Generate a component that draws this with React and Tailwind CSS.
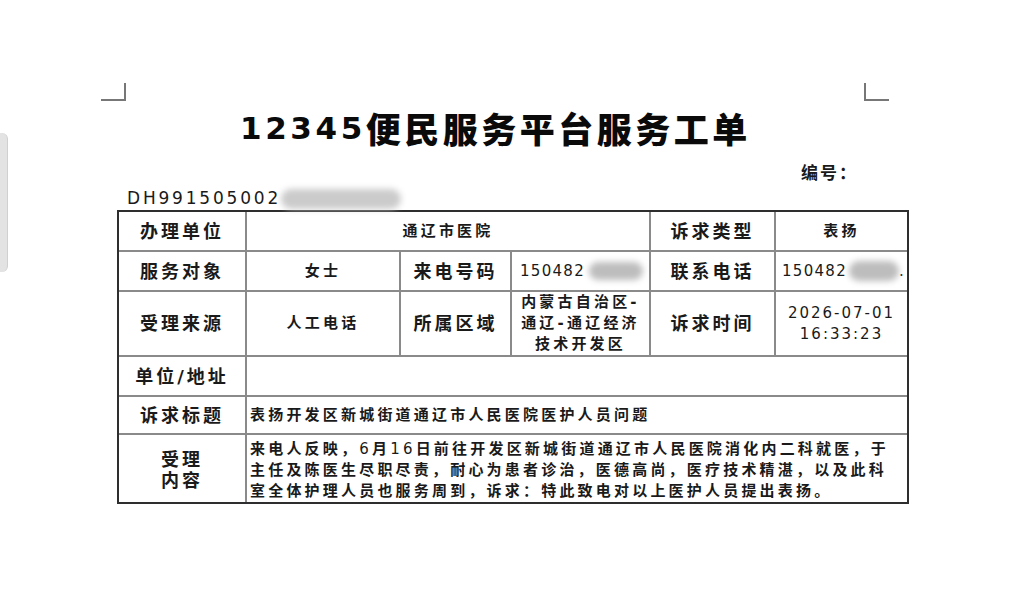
const Label = ({ children, className = '' }) => (
  <div className={`bg-white flex items-center justify-center text-center text-[18px] leading-[21px] tracking-[3px] font-semibold ${className}`}>
    {children}
  </div>
);

const Value = ({ children, className = '' }) => (
  <div className={`bg-white flex items-center text-[15px] leading-[21px] tracking-[3.2px] font-semibold ${className}`}>
    {children}
  </div>
);

const Smudge = ({ className = '' }) => (
  <span className={`inline-block rounded-full bg-[#bdbdbd] blur-[3px] ${className}`} />
);

export default function App() {
  return (
    <div className="relative w-[1024px] h-[612px] bg-white overflow-hidden text-[#1a1a1a] font-['DejaVu_Sans','Noto_Sans_CJK_SC',sans-serif]">
      {/* edge of the next page */}
      <div className="absolute left-0 top-[133px] w-[8px] h-[139px] rounded-r-[6px] bg-[#e3e3e3] border-r border-[#d0d0d0]" />

      <div className="pt-[83px]">
        {/* page corner marks */}
        <div className="ml-[101px] w-[788px] flex justify-between">
          <div className="w-[25px] h-[18px] border-r-2 border-b-2 border-[#777]" />
          <div className="w-[25px] h-[18px] border-l-2 border-b-2 border-[#777]" />
        </div>

        {/* title */}
        <h1 className="mt-[7px] pl-[240px] h-[40px] flex items-center whitespace-nowrap text-[#0a0a0a]">
          <span className="text-[31px] font-bold tracking-[3.6px] font-['DejaVu_Sans',sans-serif]">12345</span>
          <span className="text-[35px] font-black tracking-[3.5px] font-['Noto_Sans_CJK_SC',sans-serif]">便民服务平台服务工单</span>
        </h1>

        <div className="mt-[12px] pl-[801px] h-[24px] flex items-center text-[17px] font-bold tracking-[2px] font-['Noto_Sans_CJK_SC',sans-serif]">
          编号：
        </div>

        <div className="mt-[5px] pl-[127px] h-[20px] flex items-center text-[17px] tracking-[2.8px]">
          <span>DH991505002</span>
          <Smudge className="w-[120px] h-[20px] bg-[#cbcbcb]" />
        </div>

        {/* work order table */}
        <div className="mt-[1px] ml-[117px] w-[792px] border-2 border-[#2e2e2e] bg-[#8a8a8a] grid gap-[2px] grid-cols-[126px_152px_109px_137px_123px_131px] grid-rows-[38px_38px_63px_38px_36px_67px]">
          <Label>办理单位</Label>
          <Value className="col-span-3 justify-center">通辽市医院</Value>
          <Label>诉求类型</Label>
          <Value className="justify-center">表扬</Value>

          <Label>服务对象</Label>
          <Value className="justify-center">女士</Value>
          <Label>来电号码</Label>
          <Value className="pl-[8px]">
            <span className="font-normal tracking-[1.3px]">150482</span>
            <Smudge className="ml-[4px] w-[54px] h-[18px]" />
          </Value>
          <Label>联系电话</Label>
          <Value className="pl-[6px]">
            <span className="font-normal tracking-[1.3px]">150482</span>
            <Smudge className="ml-[2px] w-[58px] h-[20px]" />
            <span className="font-normal">.</span>
          </Value>

          <Label>受理来源</Label>
          <Value className="justify-center">人工电话</Value>
          <Label>所属区域</Label>
          <Value className="justify-center text-center tracking-[2.4px] leading-[21.5px]">
            <div>
              <div>内蒙古自治区-</div>
              <div>通辽-通辽经济</div>
              <div>技术开发区</div>
            </div>
          </Value>
          <Label>诉求时间</Label>
          <Value className="justify-center text-center">
            <div className="font-normal tracking-[2px]">
              <div>2026-07-01</div>
              <div>16:33:23</div>
            </div>
          </Value>

          <Label>单位/地址</Label>
          <Value className="col-span-5" />

          <Label>诉求标题</Label>
          <Value className="col-span-5 pl-[3px]">表扬开发区新城街道通辽市人民医院医护人员问题</Value>

          <Label className="pt-[2px]">
            <div>
              <div>受理</div>
              <div>内容</div>
            </div>
          </Label>
          <Value className="col-span-5 pl-[3px] pt-[4px] leading-[19px] whitespace-nowrap">
            <div>
              <div>来电人反映，<span className="font-normal">6</span>月<span className="font-normal">16</span>日前往开发区新城街道通辽市人民医院消化内二科就医，于</div>
              <div>主任及陈医生尽职尽责，耐心为患者诊治，医德高尚，医疗技术精湛，以及此科</div>
              <div>室全体护理人员也服务周到，诉求：特此致电对以上医护人员提出表扬。</div>
            </div>
          </Value>
        </div>
      </div>
    </div>
  );
}
